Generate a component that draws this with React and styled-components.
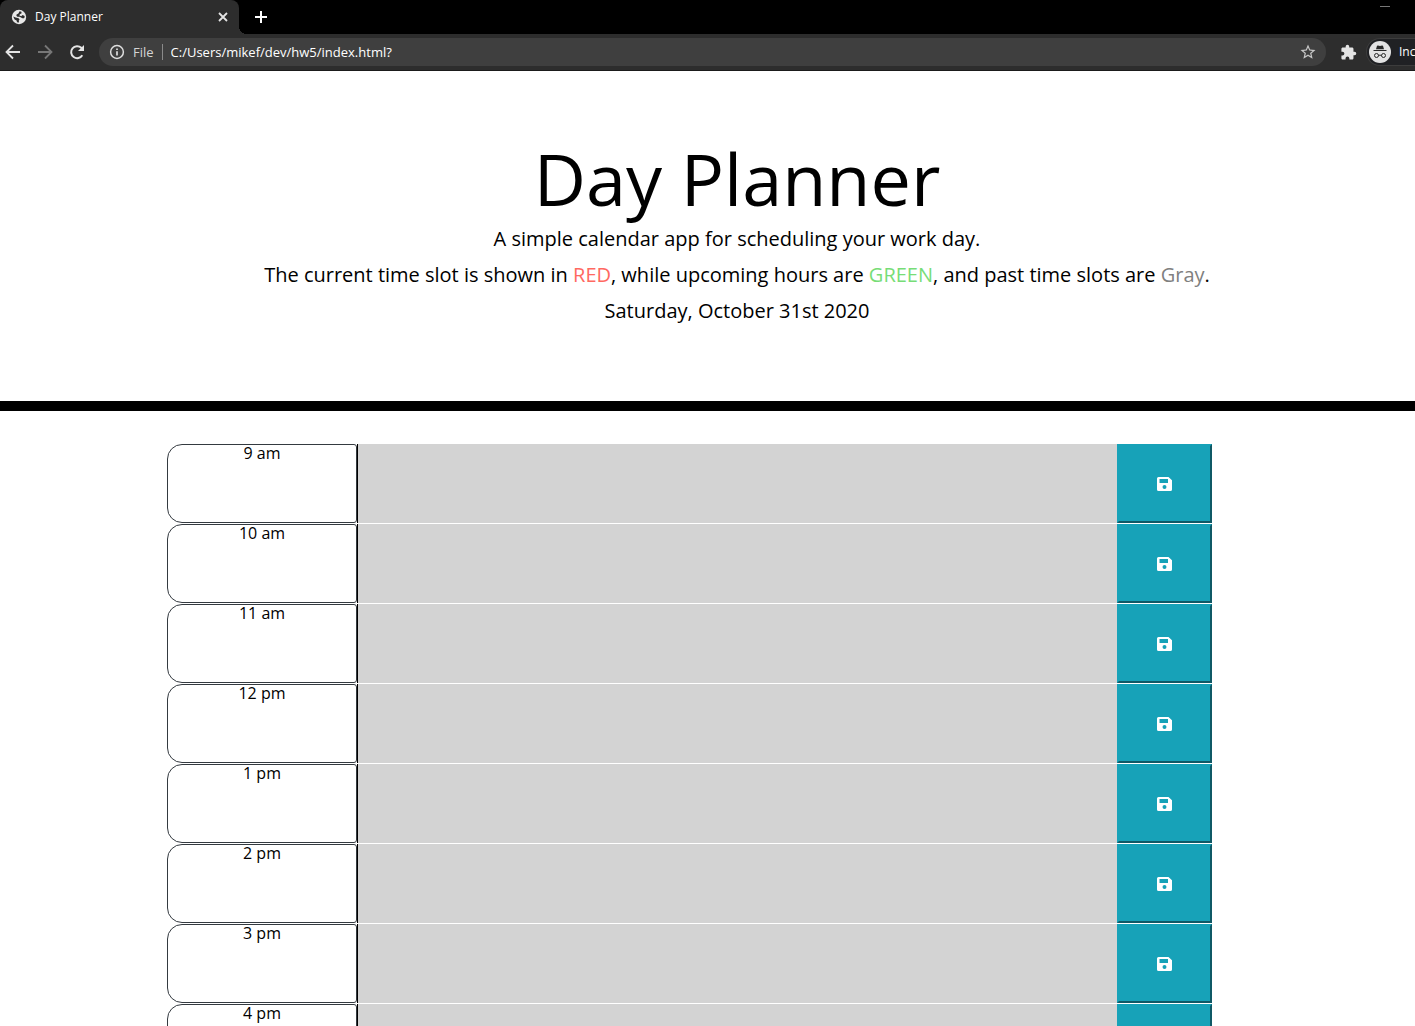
import React from "react";
import styled, { createGlobalStyle } from "styled-components";

const uiFont = `"Open Sans", "Noto Sans", sans-serif`;
const hours = ["9 am", "10 am", "11 am", "12 pm", "1 pm", "2 pm", "3 pm", "4 pm"];

const GlobalStyle = createGlobalStyle`
  *, *::before, *::after { box-sizing: border-box; }
  body { margin: 0; background: #fff; color: #000; font-family: "Open Sans", sans-serif; }
  button, textarea, input { font: inherit; }
  h1, p { margin: 0; }
`;

const Shell = styled.div`
  display: flex;
  flex-direction: column;
  height: 100vh;
  overflow: hidden;
`;

const TabStrip = styled.div`
  display: flex;
  align-items: stretch;
  flex: none;
  height: 34px;
  background: #000;
`;

const Tab = styled.div`
  position: relative;
  display: flex;
  align-items: center;
  gap: 8px;
  width: 239px;
  padding: 0 8px 0 11px;
  border-radius: 8px 8px 0 0;
  background: #2d2d2d;
  color: #fff;
  font: 12px/16px ${uiFont};

  &::after {
    content: "";
    position: absolute;
    left: 100%;
    bottom: 0;
    width: 8px;
    height: 8px;
    background: radial-gradient(circle at 100% 0, transparent 8px, #2d2d2d 8px);
  }
`;

const TabTitle = styled.span`
  flex: 1;
`;

const IconButton = styled.button`
  display: flex;
  align-items: center;
  justify-content: center;
  flex: none;
  width: ${(p) => p.$width || 16}px;
  padding: 0;
  border: 0;
  background: none;
  color: ${(p) => p.$color || "#e4e4e4"};

  svg { flex: none; }
`;

const WindowControls = styled.div`
  display: flex;
  align-items: flex-start;
  margin-left: auto;
  padding: 2px 25px 0 0;
`;

const Toolbar = styled.div`
  display: flex;
  align-items: center;
  flex: none;
  height: 37px;
  padding-left: 4px;
  border-bottom: 1px solid #1b1b1b;
  background: #2d2d2d;
`;

const NavButtons = styled.div`
  display: flex;
  gap: 14px;
`;

const AddressBar = styled.div`
  display: flex;
  align-items: center;
  flex: 1;
  gap: 8px;
  height: 28px;
  margin: 0 14px 0 13px;
  padding: 0 10px;
  border-radius: 14px;
  background: #3f3f3f;
  color: #fff;
  font: 13px/18px ${uiFont};
`;

const Scheme = styled.span`
  padding-right: 8px;
  border-right: 1px solid #8a8a8a;
  color: #d4d4d4;
  line-height: 16px;
`;

const Address = styled.input`
  flex: 1;
  min-width: 0;
  padding: 0;
  border: 0;
  background: none;
  color: inherit;
`;

const Profile = styled.div`
  display: flex;
  align-items: center;
  gap: 8px;
  width: 49px;
  height: 28px;
  margin-left: 10px;
  padding-left: 2px;
  overflow: hidden;
  border: 1px solid #3c3c3c;
  border-right: 0;
  border-radius: 14px 0 0 14px;
  background: #202124;
  color: #fff;
  font: 12px/16px ${uiFont};
  white-space: nowrap;

  svg { flex: none; }
`;

const Viewport = styled.div`
  flex: 1;
  min-height: 0;
  overflow: hidden;
`;

const Page = styled.div`
  width: calc(100% + 59px);
`;

const Header = styled.header`
  padding: 64px 0 72px;
  border-bottom: 10px solid #000;
  text-align: center;
`;

const Title = styled.h1`
  font-size: 72px;
  font-weight: 400;
  line-height: 86px;
`;

const Lead = styled.p`
  font-size: 20px;
  line-height: 36px;
`;

const Tint = styled.span`
  color: ${(p) => p.$color};
`;

const Planner = styled.main`
  width: 100%;
  max-width: 1140px;
  margin: 33px auto 0;
`;

const TimeBlock = styled.div`
  display: grid;
  grid-template-columns: 2fr 8fr 1fr 1fr;
  height: 80px;
  padding-bottom: 1px;
`;

const Hour = styled.label`
  border: 1px solid #343a40;
  border-radius: 15px 3px 3px 15px;
  font-size: 16px;
  line-height: 16px;
  text-align: center;
`;

const Entry = styled.textarea`
  width: 100%;
  height: 100%;
  border: 0;
  border-left: 1px solid #000;
  border-radius: 0;
  background: #d3d3d3;
  resize: none;
`;

const SaveButton = styled.button`
  display: flex;
  align-items: center;
  justify-content: center;
  padding: 0;
  border: 2px solid;
  border-color: #17a2b8 #0f5966 #0f5966 #17a2b8;
  background: #17a2b8;
  color: #fff;
`;

const Globe = () => (
  <svg width="16" height="16" viewBox="0 0 16 16" aria-hidden="true">
    <circle cx="8" cy="8" r="7.2" fill="#e8e8e8" />
    <path d="M8.6 2.2 10.4 2.8 10.6 4.2 8.8 5.2 8.4 6.4 10.2 7.2 11.6 6 13.6 7 13.6 8.6 12.2 9.4 10.4 8.8 8.8 7.8 6.4 7.8 5.4 6.8 5.6 5.4 7.4 4.6Z" fill="#2d2d2d" />
    <path d="M2.2 7.6 4.6 8.6 7.6 9.2 8.6 10.4 7.8 11.6 8 13.6 6 13.2 5.6 11.4 3.6 10.6Z" fill="#2d2d2d" />
  </svg>
);

const Stroke = ({ d, size = 16, width = 2 }) => (
  <svg width={size} height={size} viewBox="0 0 16 16" fill="none" stroke="currentColor" strokeWidth={width} aria-hidden="true">
    <path d={d} />
  </svg>
);

const Reload = () => (
  <svg width="18" height="18" viewBox="0 0 18 18" aria-hidden="true">
    <path d="M14.3 12.2A6 6 0 1 1 13.3 4.8L15 6.5" fill="none" stroke="currentColor" strokeWidth="2" />
    <path d="M16 2v6h-6z" fill="currentColor" />
  </svg>
);

const Info = () => (
  <svg width="16" height="16" viewBox="0 0 16 16" fill="none" stroke="#dedede" aria-hidden="true">
    <circle cx="8" cy="8" r="6.4" strokeWidth="1.5" />
    <path d="M8 7.2v4.2M8 4.4v1.7" strokeWidth="1.7" />
  </svg>
);

const Star = () => (
  <svg width="18" height="18" viewBox="0 0 24 24" fill="currentColor" aria-hidden="true">
    <path d="M22 9.24l-7.19-.62L12 2 9.19 8.63 2 9.24l5.46 4.73L5.82 21 12 17.27 18.18 21l-1.63-7.03L22 9.24zM12 15.4l-3.76 2.27 1-4.28-3.32-2.88 4.38-.38L12 6.1l1.71 4.04 4.38.38-3.32 2.88 1 4.28L12 15.4z" />
  </svg>
);

const Puzzle = () => (
  <svg width="17" height="17" viewBox="0 0 24 24" fill="currentColor" aria-hidden="true">
    <path d="M20.5 11H19V7c0-1.1-.9-2-2-2h-4V3.5a2.5 2.5 0 0 0-5 0V5H4c-1.1 0-2 .9-2 2v3.8h1.5a2.7 2.7 0 0 1 0 5.4H2V20c0 1.1.9 2 2 2h3.8v-1.5a2.7 2.7 0 0 1 5.4 0V22H17c1.1 0 2-.9 2-2v-4h1.5a2.5 2.5 0 0 0 0-5z" />
  </svg>
);

const Incognito = () => (
  <svg width="22" height="22" viewBox="0 0 22 22" aria-hidden="true">
    <circle cx="11" cy="11" r="11" fill="#e3e3e3" />
    <path d="M8 4.8 9 4.4 11 4.9 13 4.4 14 4.8 15 8.2H7z" fill="#292929" />
    <path d="M4.5 9.5h13" stroke="#292929" />
    <g fill="none" stroke="#292929">
      <circle cx="7.5" cy="14.5" r="2" />
      <circle cx="14.5" cy="14.5" r="2" />
      <path d="M9.5 14.5q1.5-.8 3 0" />
    </g>
  </svg>
);

const Floppy = () => (
  <svg width="15" height="14" viewBox="0 0 15 14" aria-hidden="true">
    <path fillRule="evenodd" fill="currentColor" d="M1.5 0H11.5L15 3.2V12.5Q15 14 13.5 14H1.5Q0 14 0 12.5V1.5Q0 0 1.5 0ZM2.5 2V6H11V2ZM7.5 8a2 2 0 1 0 0 4 2 2 0 0 0 0-4Z" />
  </svg>
);

export default function App() {
  return (
    <Shell>
      <GlobalStyle />
      <TabStrip>
        <Tab>
          <Globe />
          <TabTitle>Day Planner</TabTitle>
          <IconButton aria-label="Close tab">
            <Stroke d="M4 4l8 8M12 4l-8 8" width={1.8} />
          </IconButton>
        </Tab>
        <IconButton $width={44} $color="#fff" aria-label="New tab">
          <Stroke d="M8 2v12M2 8h12" />
        </IconButton>
        <WindowControls>
          <IconButton $width={10} $color="#777" aria-label="Minimize">
            <svg width="10" height="9" aria-hidden="true"><path d="M0 4.5h10" stroke="currentColor" /></svg>
          </IconButton>
        </WindowControls>
      </TabStrip>
      <Toolbar>
        <NavButtons>
          <IconButton $width={18} aria-label="Back">
            <Stroke d="M15 8H2.5M8 1.5 1.5 8 8 14.5" width={1.8} />
          </IconButton>
          <IconButton $width={18} $color="#777" aria-label="Forward">
            <Stroke d="M1 8h12.5M8 1.5 14.5 8 8 14.5" width={1.8} />
          </IconButton>
          <IconButton $width={18} aria-label="Reload">
            <Reload />
          </IconButton>
        </NavButtons>
        <AddressBar>
          <Info />
          <Scheme>File</Scheme>
          <Address aria-label="Address" defaultValue="C:/Users/mikef/dev/hw5/index.html?" />
          <IconButton $color="#c8c8c8" aria-label="Bookmark">
            <Star />
          </IconButton>
        </AddressBar>
        <IconButton aria-label="Extensions">
          <Puzzle />
        </IconButton>
        <Profile>
          <Incognito />
          <span>Inc</span>
        </Profile>
      </Toolbar>
      <Viewport>
        <Page>
          <Header>
            <Title>Day Planner</Title>
            <Lead>A simple calendar app for scheduling your work day.</Lead>
            <Lead>
              The current time slot is shown in <Tint $color="#ff6961">RED</Tint>, while upcoming hours are{" "}
              <Tint $color="#77dd77">GREEN</Tint>, and past time slots are <Tint $color="#808080">Gray</Tint>.
            </Lead>
            <Lead>Saturday, October 31st 2020</Lead>
          </Header>
          <Planner>
            {hours.map((hour, i) => (
              <TimeBlock key={hour}>
                <Hour htmlFor={`entry-${i}`}>{hour}</Hour>
                <Entry id={`entry-${i}`} />
                <SaveButton aria-label={`Save ${hour}`}>
                  <Floppy />
                </SaveButton>
              </TimeBlock>
            ))}
          </Planner>
        </Page>
      </Viewport>
    </Shell>
  );
}
